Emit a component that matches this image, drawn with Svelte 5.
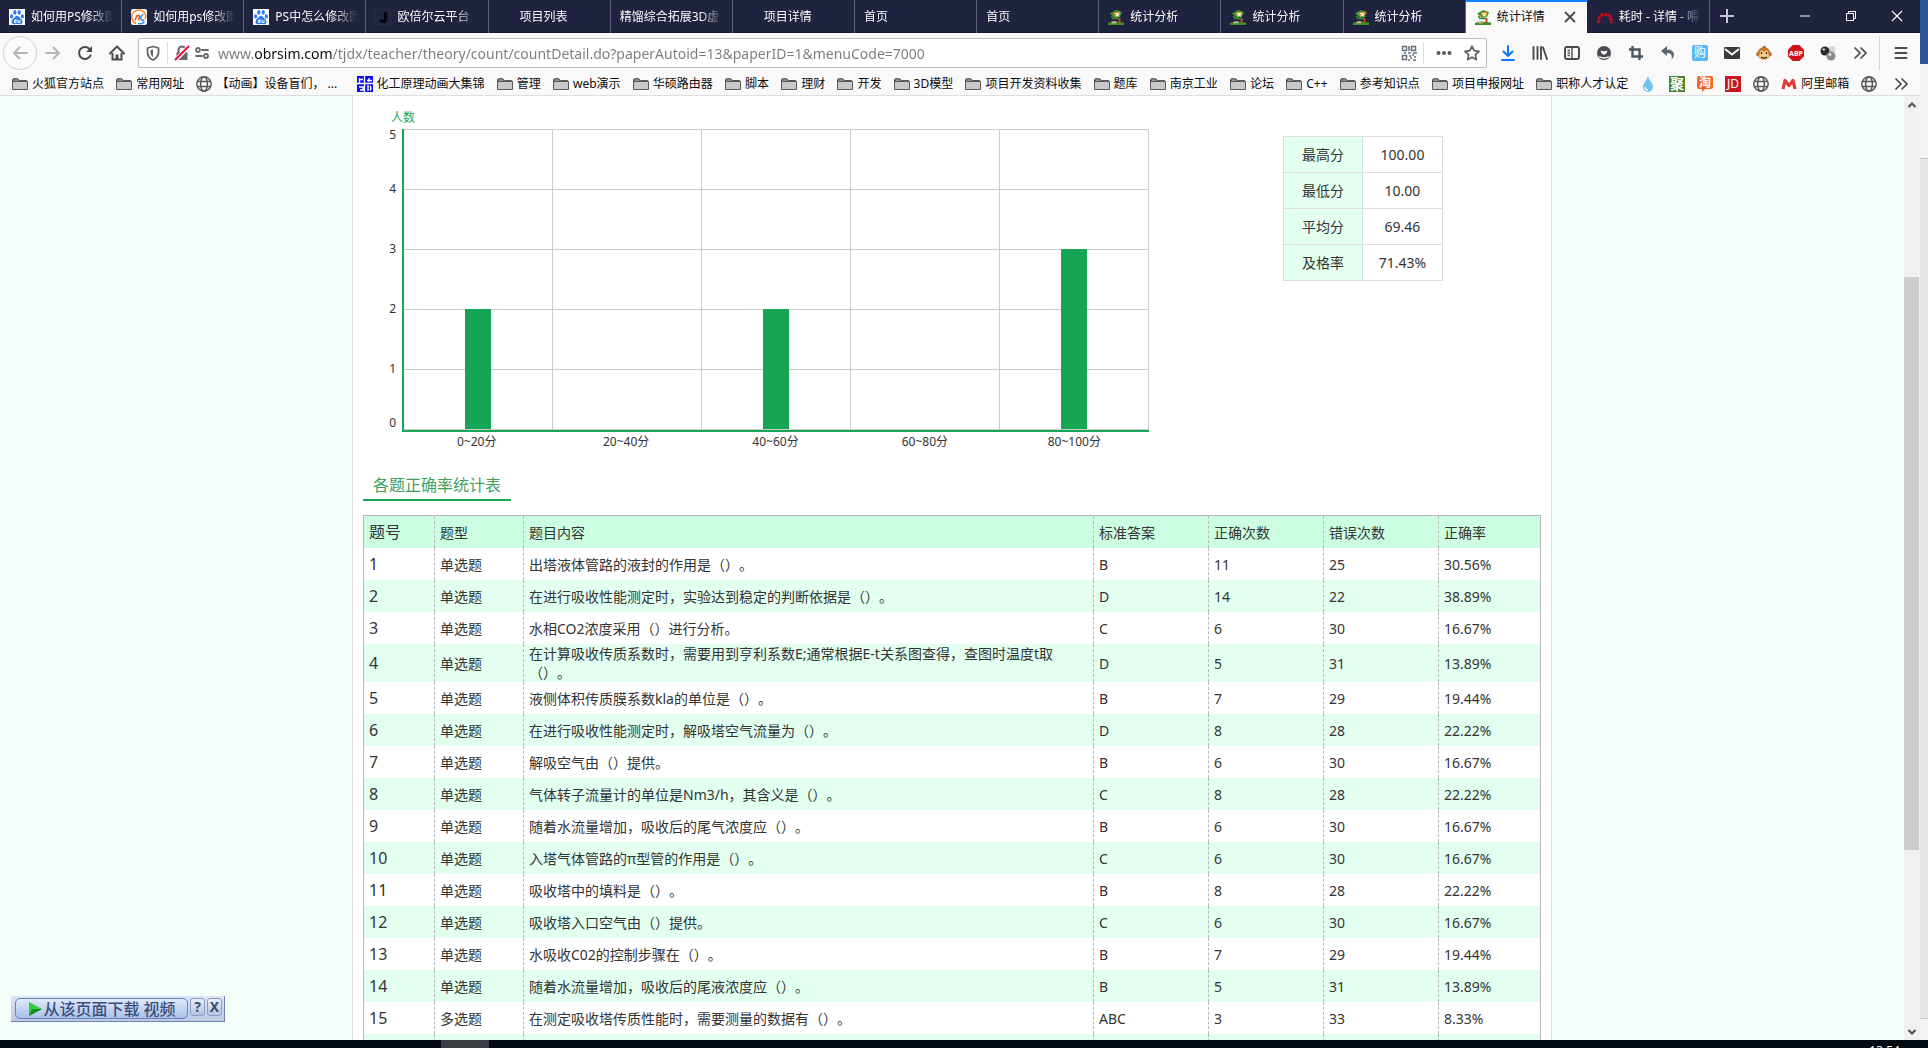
<script lang="ts">
	type Tab = { title: string; icon?: string; active?: boolean };
	type Bookmark = { label?: string; icon: string; title?: string; wide?: boolean };

	const tabs: Tab[] = [
		{ title: '如何用PS修改图', icon: 'baidu' },
		{ title: '如何用ps修改图', icon: 'nc' },
		{ title: 'PS中怎么修改图', icon: 'baidu' },
		{ title: '欧倍尔云平台', icon: 'letter-j' },
		{ title: '项目列表', icon: 'blank' },
		{ title: '精馏综合拓展3D虚' },
		{ title: '项目详情', icon: 'blank' },
		{ title: '首页' },
		{ title: '首页' },
		{ title: '统计分析', icon: 'campus' },
		{ title: '统计分析', icon: 'campus' },
		{ title: '统计分析', icon: 'campus' },
		{ title: '统计详情', icon: 'campus', active: true },
		{ title: '耗时 - 详情 - 嘚', icon: 'arc' }
	];

	const bookmarks: Bookmark[] = [
		{ label: '火狐官方站点', icon: 'folder' },
		{ label: '常用网址', icon: 'folder' },
		{ label: '【动画】设备盲们， ...', icon: 'globe', wide: true },
		{ label: '化工原理动画大集锦', icon: 'blocks' },
		{ label: '管理', icon: 'folder' },
		{ label: 'web演示', icon: 'folder' },
		{ label: '华硕路由器', icon: 'folder' },
		{ label: '脚本', icon: 'folder' },
		{ label: '理财', icon: 'folder' },
		{ label: '开发', icon: 'folder' },
		{ label: '3D模型', icon: 'folder' },
		{ label: '项目开发资料收集', icon: 'folder' },
		{ label: '题库', icon: 'folder' },
		{ label: '南京工业', icon: 'folder' },
		{ label: '论坛', icon: 'folder' },
		{ label: 'C++', icon: 'folder' },
		{ label: '参考知识点', icon: 'folder' },
		{ label: '项目申报网址', icon: 'folder' },
		{ label: '职称人才认定', icon: 'folder' },
		{ icon: 'drop', title: 'drop' },
		{ icon: 'ju', title: 'ju' },
		{ icon: 'tao', title: 'tao' },
		{ icon: 'jd', title: 'jd' },
		{ icon: 'globe', title: 'site' },
		{ label: '阿里邮箱', icon: 'mail-m' },
		{ icon: 'globe', title: 'site' }
	];

	const tools = [
		'download', 'library', 'sidebar', 'account', 'crop', 'undo',
		'gou', 'envelope', 'monkey', 'abp', 'balls', 'more'
	];

	let url = $state('www.obrsim.com/tjdx/teacher/theory/count/countDetail.do?paperAutoid=13&paperID=1&menuCode=7000');
	let showDownloader = $state(true);

	const ticks = [5, 4, 3, 2, 1, 0];
	const unit = 60;
	const ranges = [
		{ label: '0~20分', count: 2 },
		{ label: '20~40分', count: 0 },
		{ label: '40~60分', count: 2 },
		{ label: '60~80分', count: 0 },
		{ label: '80~100分', count: 3 }
	];

	const summary = [
		['最高分', '100.00'],
		['最低分', '10.00'],
		['平均分', '69.46'],
		['及格率', '71.43%']
	];

	const headers = ['题号', '题型', '题目内容', '标准答案', '正确次数', '错误次数', '正确率'];
	const rows = [
		['1', '单选题', '出塔液体管路的液封的作用是（）。', 'B', '11', '25', '30.56%'],
		['2', '单选题', '在进行吸收性能测定时，实验达到稳定的判断依据是（）。', 'D', '14', '22', '38.89%'],
		['3', '单选题', '水相CO2浓度采用（）进行分析。', 'C', '6', '30', '16.67%'],
		['4', '单选题', '在计算吸收传质系数时，需要用到亨利系数E;通常根据E-t关系图查得，查图时温度t取（）。', 'D', '5', '31', '13.89%'],
		['5', '单选题', '液侧体积传质膜系数kla的单位是（）。', 'B', '7', '29', '19.44%'],
		['6', '单选题', '在进行吸收性能测定时，解吸塔空气流量为（）。', 'D', '8', '28', '22.22%'],
		['7', '单选题', '解吸空气由（）提供。', 'B', '6', '30', '16.67%'],
		['8', '单选题', '气体转子流量计的单位是Nm3/h，其含义是（）。', 'C', '8', '28', '22.22%'],
		['9', '单选题', '随着水流量增加，吸收后的尾气浓度应（）。', 'B', '6', '30', '16.67%'],
		['10', '单选题', '入塔气体管路的π型管的作用是（）。', 'C', '6', '30', '16.67%'],
		['11', '单选题', '吸收塔中的填料是（）。', 'B', '8', '28', '22.22%'],
		['12', '单选题', '吸收塔入口空气由（）提供。', 'C', '6', '30', '16.67%'],
		['13', '单选题', '水吸收C02的控制步骤在（）。', 'B', '7', '29', '19.44%'],
		['14', '单选题', '随着水流量增加，吸收后的尾液浓度应（）。', 'B', '5', '31', '13.89%'],
		['15', '多选题', '在测定吸收塔传质性能时，需要测量的数据有（）。', 'ABC', '3', '33', '8.33%'],
		['', '', '', '', '', '', '']
	];
</script>

{#snippet icon(name: string)}
	<svg class="icon" viewBox="0 0 16 16" fill="none" aria-hidden="true">
		{#if name === 'baidu'}
			<rect width="16" height="16" fill="#fff" />
			<g fill="#2f7cf0">
				<ellipse cx="2.6" cy="7.4" rx="1.6" ry="2.1" />
				<ellipse cx="5.8" cy="3.4" rx="1.6" ry="2.3" />
				<ellipse cx="10.2" cy="3.4" rx="1.6" ry="2.3" />
				<ellipse cx="13.4" cy="7.4" rx="1.6" ry="2.1" />
				<path d="M8 6.8c1.5 0 2.3 1.5 3.3 2.5 1.3 1.1 2.5 2.1 2.2 3.9-.3 1.9-2 2.3-3.3 2-1.3-.2-3.1-.2-4.4 0-1.4.3-3-.2-3.3-2-.2-1.8 1-2.8 2.2-3.9C5.7 8.3 6.5 6.8 8 6.8z" />
			</g>
			<path d="M7 10v3.5H5.5v-2H7M9 11v2.5h2V11" stroke="#fff" />
		{:else if name === 'nc'}
			<rect width="16" height="16" rx="2" fill="#fff" />
			<path d="M5 14.5a7 7 0 0 1 5.5-13 6.500 6.500 0 0 1 3.5 9" stroke="#f08a2c" stroke-width="1.5" />
			<path d="M4 11.5l2-5.5M5.500 8c1-2 3.5-2.5 3-.5l-1 4" stroke="#e96b1a" stroke-width="1.6" />
			<path d="M12.5 5.5c-2 .3-3 2.5-2.6 4.2.3 1.6 1.8 2 3.1 1.3M7 14.5c3 .8 5.5-.5 6.5-2" stroke="#3d8de0" stroke-width="1.6" />
		{:else if name === 'letter-j'}
			<rect x=".5" y=".5" width="15" height="15" stroke="#292a40" />
			<path d="M10.5 3v7.5c0 2.5-4.5 2.5-5 0" stroke="#050510" stroke-width="3" />
		{:else if name === 'campus'}
			<path d="M0 14l5-1.5 6 .5 5 .5V16H0z" fill="#3f8f22" />
			<path d="M3 13c2-1 4-.8 6-.4l-1 1.6-4 .4z" fill="#c9b58f" />
			<path d="M2 4.500L8 1l6 2-2 5-5 1z" fill="#3c9a35" />
			<path d="M6 4l6-1.5v3L7 8z" fill="#f08c28" />
			<path d="M7 4.500l4 .5-3 1.500 3 .5" stroke="#fff" />
			<path d="M3.500 7l1.500 2.500h6" stroke="#3c8a30" stroke-width="1.5" />
			<rect x="10.5" y="9" width="2" height="5" fill="#b84a2a" />
		{:else if name === 'arc'}
			<path d="M1.8 14C1 9 3 5.500 8 5.500S15 9 14.200 14" stroke="#b5121b" stroke-width="3.2" stroke-dasharray="3.2 .6" />
		{:else if name === 'folder'}
			<path d="M.5 13.5v-10l.8-.8h4.500l1.700 1.800h7.200l.8.8v8.200z" fill="#c8c8ca" stroke="#58585a" />
			<path d="M1 4v1.500h14M1.500 3.200h4.300l1.400 1.800H1.500z" stroke="#58585a" fill="#ededee" />
		{:else if name === 'globe'}
			<g stroke="#5a5a5d" stroke-width="1.5">
				<circle cx="8" cy="8" r="7.2" />
				<ellipse cx="8" cy="8" rx="3.4" ry="7.200" />
				<path d="M1.500 5.500h13M1.500 10.500h13" />
			</g>
		{:else if name === 'blocks'}
			<rect width="16" height="16" fill="#0808f4" />
			<path d="M0 7.500h16M7.500 0v16M2.500 2v5M2 3.500h4M12 2v4M10 4.500h5M2 11h4v3H3M11 9v6M13 10c1.500 2 1.500 3 0 4.500" stroke="#fff" stroke-width="1.4" />
		{:else if name === 'drop'}
			<path d="M8 0C9 4.500 13 7 13 11a5 5 0 0 1-10 0C3 7 7 4.500 8 0z" fill="#6ec1e8" />
			<path d="M5 11c0 2 1.300 3 3 3" stroke="#fff" stroke-width="1.3" />
		{:else if name === 'ju'}
			<rect width="16" height="16" fill="#47862a" />
			<text x="8" y="13" text-anchor="middle" font-size="14" font-weight="700" fill="#fff">聚</text>
		{:else if name === 'tao'}
			<path d="M2 0h12a2 2 0 0 1 2 2v9a2 2 0 0 1-2 2H8l-3 3v-3H2a2 2 0 0 1-2-2V2a2 2 0 0 1 2-2z" fill="#f2672a" />
			<text x="8" y="11" text-anchor="middle" font-size="12" font-weight="700" fill="#fff">淘</text>
		{:else if name === 'jd'}
			<rect width="16" height="16" fill="#c81623" />
			<text x="8" y="12" text-anchor="middle" font-size="12" fill="#fff">JD</text>
		{:else if name === 'mail-m'}
			<path d="M2 13L4 4.500l4 5 4-5L14 13" stroke="#e0393e" stroke-width="3.2" stroke-linejoin="round" />
		{:else if name === 'back'}
			<path d="M15 8H2M7.500 2.500L2 8l5.500 5.500" stroke="#b5b5b7" stroke-width="2" stroke-linecap="round" stroke-linejoin="round" />
		{:else if name === 'forward'}
			<path d="M1 8h13M8.500 2.500L14 8l-5.500 5.500" stroke="#b5b5b7" stroke-width="2" stroke-linecap="round" stroke-linejoin="round" />
		{:else if name === 'reload'}
			<path d="M13.500 10.500a6 6 0 1 1-1.200-6.800l1.700 1.800" stroke="#4a4a4f" stroke-width="2" stroke-linecap="round" />
			<path d="M15 1v6H9z" fill="#4a4a4f" />
		{:else if name === 'home'}
			<path d="M1 8.500L8 1.500l7 7" stroke="#4a4a4f" stroke-width="2" stroke-linecap="round" stroke-linejoin="round" />
			<path d="M3.500 8v6.500h9V8" stroke="#4a4a4f" stroke-width="2" />
			<path d="M6.500 9.500h3V15h-3z" fill="#4a4a4f" />
		{:else if name === 'shield'}
			<path d="M8 1.500l5.500 1.500v4c0 4-2 6.500-5.500 8-3.500-1.500-5.500-4-5.500-8V3z" stroke="#666669" stroke-width="1.8" stroke-linejoin="round" />
			<path d="M8 4.500v7.500c-1.700-1-2.500-2.500-2.500-5V5.200z" fill="#666669" />
		{:else if name === 'lock'}
			<path d="M4.500 7V5a3.500 3.500 0 0 1 7 0v2" stroke="#666669" stroke-width="2" />
			<rect x="2.5" y="7" width="11" height="8" rx="1" fill="#666669" />
			<path d="M1.500 15L14.500 2" stroke="#fff" stroke-width="4" />
			<path d="M1.500 14.500L14.500 1.500" stroke="#ff0039" stroke-width="1.8" stroke-linecap="round" />
		{:else if name === 'perms'}
			<g stroke="#666669" stroke-width="1.8">
				<circle cx="4" cy="5" r="2" />
				<path d="M8 5h6M2 11h6" stroke-linecap="round" />
				<circle cx="12" cy="11" r="2" />
			</g>
		{:else if name === 'qr'}
			<g stroke="#66707a" stroke-width="1.5">
				<path d="M1.500 1.500h4v4h-4zM10.500 1.500h4v4h-4zM1.500 10.500h4v4h-4z" />
				<path d="M8 1v5M3 8h2M7 8h3M12 8h4M8 11h2M11 10h2M9 13h2M13 12h2M12 15h3M7 15h2" />
			</g>
		{:else if name === 'dots'}
			<g fill="#58585b"><circle cx="2.5" cy="8" r="2" /><circle cx="8" cy="8" r="2" /><circle cx="13.5" cy="8" r="2" /></g>
		{:else if name === 'star'}
			<path d="M8 1.200l2.100 4.500 4.900.7-3.600 3.300.9 4.900L8 12.200l-4.300 2.400.9-4.900L1 6.400l4.900-.7z" stroke="#5e5e61" stroke-width="1.7" stroke-linejoin="round" />
		{:else if name === 'download'}
			<path d="M8 1v10M3.500 6.500L8 11l4.500-4.500M2 15h12" stroke="#0a7bff" stroke-width="2" stroke-linecap="round" stroke-linejoin="round" />
		{:else if name === 'library'}
			<path d="M1.500 2v12M5.500 2v12M9 2v12M11 2.500l4 11.500" stroke="#4a4a4f" stroke-width="1.9" stroke-linecap="round" />
		{:else if name === 'sidebar'}
			<rect x="1" y="2" width="14" height="12" rx="2" stroke="#4a4a4f" stroke-width="2" />
			<path d="M8 2v12M3.500 5.500H6M3.500 8H6M3.500 10.500H6" stroke="#4a4a4f" stroke-width="1.4" />
		{:else if name === 'account'}
			<circle cx="8" cy="8" r="7" fill="#4a4a4f" />
			<path d="M4.600 5.500c.5 5.500 6.300 5.500 6.800 0-2 1-4.800 1-6.800 0z" fill="#f9f9fa" />
			<path d="M3 11.500c3 1.800 7 1.800 10 0" stroke="#f9f9fa" stroke-width="1.3" />
		{:else if name === 'crop'}
			<path d="M4.500 1v10.500H15M1 4.500h10.500V15" stroke="#4a5560" stroke-width="2.4" />
		{:else if name === 'undo'}
			<path d="M7 1L1 6l6 5V8c4 0 5.500 2 4.500 6.500C15.500 11 15 4.500 7 4.500z" fill="#5b6670" />
		{:else if name === 'gou'}
			<rect width="16" height="16" rx="2" fill="#58b8f5" />
			<text x="8" y="12" text-anchor="middle" font-size="12" fill="#fff">购</text>
		{:else if name === 'envelope'}
			<rect y="2" width="16" height="12" rx="1" fill="#3b3b3e" />
			<path d="M1 4l7 5.500L15 4" stroke="#f9f9fa" stroke-width="1.8" />
		{:else if name === 'monkey'}
			<circle cx="2.5" cy="9" r="2.3" fill="#b06b24" />
			<circle cx="13.5" cy="9" r="2.3" fill="#b06b24" />
			<circle cx="8" cy="8.5" r="6.5" fill="#c27a2c" />
			<path d="M6 2.500L9 .5l1 2" fill="#8a4f17" />
			<ellipse cx="8" cy="11" rx="5" ry="4" fill="#f3cd8c" />
			<circle cx="5.8" cy="7.5" r="2" fill="#f3cd8c" />
			<circle cx="10.2" cy="7.5" r="2" fill="#f3cd8c" />
			<path d="M5.500 7v2M10.500 7v2M5 12c2 1.500 4 1.500 6 0" stroke="#40240c" stroke-width="1.2" />
		{:else if name === 'abp'}
			<path d="M4.700 0h6.600L16 4.700v6.600L11.300 16H4.700L0 11.300V4.700z" fill="#d0101a" />
			<text x="8" y="10.5" text-anchor="middle" font-size="7" font-weight="700" fill="#fff">ABP</text>
		{:else if name === 'balls'}
			<circle cx="12" cy="4.5" r="3.5" fill="#d6d6d6" />
			<circle cx="5" cy="6" r="4.5" fill="#2a2a2a" />
			<circle cx="11" cy="11" r="4.5" fill="#8c8c8c" />
			<circle cx="3.8" cy="4.5" r="1.3" fill="#c8c8c8" />
			<circle cx="10" cy="9.5" r="1.5" fill="#ddd" />
		{:else if name === 'more'}
			<path d="M3 3l5 5-5 5M9 3l5 5-5 5" stroke="#4a4a4f" stroke-width="1.7" stroke-linecap="round" />
		{:else if name === 'menu'}
			<path d="M2.500 3h11M2.500 8h11M2.500 13h11" stroke="#4a4a4f" stroke-width="2" stroke-linecap="round" />
		{:else if name === 'plus'}
			<path d="M8 1v14M1 8h14" stroke="#c9c9d1" stroke-width="2" />
		{:else if name === 'minimize'}
			<path d="M3 8h10" stroke="#fff" />
		{:else if name === 'restore'}
			<path d="M3.500 5.500h7v7h-7zM5.500 5.500v-2h7v7h-2" stroke="#fff" />
		{:else if name === 'close'}
			<path d="M3 3l10 10M13 3L3 13" stroke="#fff" stroke-width="1.1" />
		{:else if name === 'tab-close'}
			<path d="M3.500 3.500l9 9M12.500 3.500l-9 9" stroke="#4a4a4f" stroke-width="1.8" stroke-linecap="round" />
		{:else if name === 'up'}
			<path d="M4.500 10L8 6.500l3.500 3.500" stroke="#555" stroke-width="2.2" />
		{:else if name === 'down'}
			<path d="M4.500 6L8 9.500 11.500 6" stroke="#555" stroke-width="2.2" />
		{:else if name === 'play'}
			<path d="M2 1l13 7L2 15z" fill="#2ed03c" />
			<path d="M5 8h10L2 15z" fill="#138a28" />
		{/if}
	</svg>
{/snippet}

<div class="desktop">
	<div class="screen">
		<div class="browser">
			<div class="tab-bar">
				<div class="tabs">
					{#each tabs as tab}
						<div class="tab" class:active={tab.active}>
							<button class="tab-button">
								{#if tab.icon}{@render icon(tab.icon)}{/if}
								<span class="tab-title">{tab.title}</span>
							</button>
							{#if tab.active}
								<button class="tab-close" aria-label="关闭标签页">{@render icon('tab-close')}</button>
							{/if}
						</div>
					{/each}
				</div>
				<button class="new-tab" aria-label="新建标签页">{@render icon('plus')}</button>
				<div class="window-buttons">
					<button aria-label="最小化">{@render icon('minimize')}</button>
					<button aria-label="还原">{@render icon('restore')}</button>
					<button aria-label="关闭">{@render icon('close')}</button>
				</div>
			</div>

			<div class="nav-bar">
				<button class="back" aria-label="后退">{@render icon('back')}</button>
				<button class="tool" aria-label="前进">{@render icon('forward')}</button>
				<button class="tool" aria-label="刷新">{@render icon('reload')}</button>
				<button class="tool" aria-label="主页">{@render icon('home')}</button>
				<div class="url-bar">
					<span class="shield">{@render icon('shield')}</span>
					{@render icon('lock')}
					{@render icon('perms')}
					<input type="text" aria-label="地址" bind:value={url} spellcheck="false" />
					<span class="qr">{@render icon('qr')}</span>
					<span class="url-actions">
						{@render icon('dots')}
						{@render icon('star')}
					</span>
				</div>
				{#each tools as tool}
					<button class="tool" aria-label={tool}>{@render icon(tool)}</button>
				{/each}
				<span class="nav-divider"></span>
				<button class="tool" aria-label="菜单">{@render icon('menu')}</button>
			</div>

			<nav class="bookmarks">
				{#each bookmarks as mark}
					<a href="#top" aria-label={mark.label ?? mark.title}>
						{@render icon(mark.icon)}
						{#if mark.label}<span class:wide={mark.wide}>{mark.label}</span>{/if}
					</a>
				{/each}
				<button class="more-marks" aria-label="更多书签">{@render icon('more')}</button>
			</nav>

			<div class="viewport">
				<div class="page">
					<main class="card">
						<div class="overview">
							<div class="chart">
								<div class="axis-name">人数</div>
								<div class="chart-body">
									<div class="y-labels">
										{#each ticks as tick}<span>{tick}</span>{/each}
									</div>
									<div class="plot">
										{#each ranges as range}
											<div class="slot">
												{#if range.count}
													<div class="bar" style="height: {range.count * unit}px"></div>
												{/if}
											</div>
										{/each}
									</div>
								</div>
								<div class="x-labels">
									{#each ranges as range}<span>{range.label}</span>{/each}
								</div>
							</div>

							<table class="summary">
								<tbody>
									{#each summary as [label, value]}
										<tr>
											<th scope="row">{label}</th>
											<td>{value}</td>
										</tr>
									{/each}
								</tbody>
							</table>
						</div>

						<h2>各题正确率统计表</h2>

						<table class="questions">
							<colgroup>
								<col class="c-no" />
								<col class="c-type" />
								<col />
								<col class="c-num" />
								<col class="c-num" />
								<col class="c-num" />
								<col class="c-rate" />
							</colgroup>
							<thead>
								<tr>
									{#each headers as header}<th scope="col">{header}</th>{/each}
								</tr>
							</thead>
							<tbody>
								{#each rows as row}
									<tr>
										{#each row as cell}<td>{cell}</td>{/each}
									</tr>
								{/each}
							</tbody>
						</table>
					</main>
				</div>

				<div class="scrollbar">
					<button aria-label="向上">{@render icon('up')}</button>
					<div class="track-above"></div>
					<div class="thumb"></div>
					<div class="track-below"></div>
					<button aria-label="向下">{@render icon('down')}</button>
				</div>

				{#if showDownloader}
					<div class="downloader">
						<button class="download-main">{@render icon('play')}从该页面下载 视频</button>
						<button class="mini" aria-label="帮助">?</button>
						<button class="mini" aria-label="关闭下载条" onclick={() => (showDownloader = false)}>X</button>
					</div>
				{/if}
			</div>
		</div>

		<div class="behind">
			<div class="behind-title"></div>
			<div class="behind-ribbon"></div>
			<div class="behind-body"></div>
			<div class="behind-status"></div>
		</div>
	</div>

	<footer class="taskbar">
		<div class="task"></div>
		<time>13:54</time>
	</footer>
</div>

<style>
	:global(body) {
		margin: 0;
	}

	.desktop {
		height: 100vh;
		display: flex;
		flex-direction: column;
		overflow: hidden;
		font-family: "Noto Sans", "Noto Sans CJK SC", sans-serif;
		font-size: 12px;
		color: #333;
		text-spacing-trim: space-all;
	}

	button {
		border: none;
		padding: 0;
		background: none;
		color: inherit;
		font: inherit;
		display: flex;
		align-items: center;
		justify-content: center;
	}

	.icon {
		width: 16px;
		height: 16px;
		flex: none;
		display: block;
	}

	.screen {
		flex: 1;
		min-height: 0;
		display: flex;
	}

	.browser {
		flex: 1;
		min-width: 0;
		display: flex;
		flex-direction: column;
	}

	/* tabs */
	.tab-bar {
		flex: none;
		height: 33px;
		box-sizing: border-box;
		background: #202340;
		border-bottom: 1px solid #14162c;
		color: #f9f9fa;
		display: flex;
	}

	.tabs {
		flex: 1;
		min-width: 0;
		display: flex;
	}

	.tab {
		flex: 1;
		min-width: 0;
		height: 33px;
		box-sizing: border-box;
		border-right: 1px solid #5f6176;
		display: flex;
	}

	.tab.active {
		background: #f9f9fa;
		border-top: 2px solid #0a84ff;
		border-right-color: #202340;
		color: #0c0c0d;
	}

	.tab-button {
		flex: 1;
		min-width: 0;
		justify-content: flex-start;
		gap: 6px;
		padding: 0 8px 0 9px;
	}

	.tab.active .tab-button {
		padding: 0 0 2px 9px;
	}

	.tab-title {
		flex: 1;
		overflow: hidden;
		white-space: nowrap;
		text-align: left;
		line-height: 20px;
		mask-image: linear-gradient(to left, transparent, #000 24px);
	}

	.tab.active .tab-title {
		mask-image: none;
	}

	.tab-close {
		width: 34px;
		padding-bottom: 2px;
	}

	.new-tab {
		width: 34px;
	}

	.window-buttons {
		margin-left: 38px;
		display: flex;
	}

	.window-buttons button {
		width: 46px;
	}

	/* navigation */
	.nav-bar {
		flex: none;
		height: 40px;
		padding: 0 3px;
		background: #f9f9fa;
		display: flex;
		align-items: center;
	}

	.back {
		width: 34px;
		height: 34px;
		box-sizing: border-box;
		border: 1px solid #d2d2d4;
		border-radius: 50%;
		background: #fbfbfb;
	}

	.tool {
		width: 32px;
		height: 32px;
	}

	.url-bar {
		flex: 1;
		height: 30px;
		box-sizing: border-box;
		margin: 0 5px;
		padding: 0 6px;
		border: 1px solid #bcbcbe;
		border-radius: 2px;
		background: #fff;
		display: flex;
		align-items: center;
		gap: 4px;
	}

	.shield {
		padding-right: 6px;
		border-right: 1px solid #dcdcde;
		margin-right: 2px;
	}

	.shield,
	.qr {
		height: 22px;
		display: flex;
		align-items: center;
	}

	.qr {
		padding-right: 6px;
		border-right: 1px solid #dcdcde;
	}

	.url-actions {
		display: flex;
		gap: 12px;
		padding-left: 8px;
	}

	/* the host name is darker than the rest of the address */
	.url-bar input {
		flex: 1;
		min-width: 0;
		height: 26px;
		margin-left: 4px;
		padding: 0;
		border: none;
		outline: none;
		font-family: inherit;
		font-size: 14px;
		background: linear-gradient(to right, #7b7b7e 37px, #0c0c0d 37px, #0c0c0d 115px, #7b7b7e 115px);
		background-clip: text;
		color: transparent;
	}

	.nav-divider {
		width: 1px;
		height: 34px;
		margin: 0 5px 0 3px;
		background: #d4d4d6;
	}

	/* bookmarks */
	.bookmarks {
		flex: none;
		height: 23px;
		box-sizing: border-box;
		padding: 0 11px 1px 12px;
		border-bottom: 1px solid #dedede;
		background: #f9f9fa;
		display: flex;
		align-items: center;
		justify-content: space-between;
	}

	.bookmarks a {
		flex: none;
		display: flex;
		align-items: center;
		gap: 4px;
		color: #0c0c0d;
		text-decoration: none;
		white-space: nowrap;
		line-height: 20px;
	}

	.wide {
		width: 128px;
	}

	.more-marks {
		margin-left: 3px;
	}

	/* page */
	.viewport {
		position: relative;
		flex: 1;
		min-height: 0;
		display: flex;
	}

	.page {
		flex: 1;
		overflow: hidden;
		background: #f5fffa;
	}

	.card {
		max-width: 1200px;
		box-sizing: border-box;
		margin: 0 auto;
		padding: 0 10px 40px;
		border: solid #ddd;
		border-width: 0 1px;
		background: #fff;
	}

	.overview {
		display: flex;
		align-items: flex-start;
	}

	.chart {
		width: 786px;
		padding-top: 12px;
	}

	.axis-name {
		margin-bottom: 1px;
		padding-left: 28px;
		line-height: 20px;
		color: #16a757;
	}

	.chart-body {
		display: flex;
		gap: 6px;
	}

	.y-labels {
		width: 33px;
		display: grid;
		grid-template-rows: 30px repeat(4, 60px) 30px;
		align-items: center;
		text-align: right;
		line-height: 12px;
	}

	.y-labels span:first-child {
		align-self: start;
	}

	.y-labels span:last-child {
		align-self: end;
	}

	.plot {
		flex: 1;
		height: 301px;
		border-left: 2px solid #16a757;
		border-bottom: 2px solid #16a757;
		background: repeating-linear-gradient(#ccc 0 1px, transparent 1px 60px);
		display: flex;
	}

	.slot {
		flex: 1;
		padding-bottom: 1px;
		border-right: 1px solid #ccc;
		display: flex;
		align-items: flex-end;
		justify-content: center;
	}

	.bar {
		width: 26px;
		background: #15a555;
	}

	.x-labels {
		padding-left: 39px;
		display: flex;
		text-align: center;
		line-height: 20px;
	}

	.x-labels span {
		flex: 1;
	}

	.summary {
		width: 160px;
		margin: 40px 0 0 134px;
		border-collapse: collapse;
		font-size: 14px;
		line-height: 20px;
		text-align: center;
	}

	.summary th,
	.summary td {
		height: 35px;
		padding: 0;
		border: 1px solid #ddd;
		font-weight: 400;
	}

	.summary th {
		width: 78px;
		background: #e3fff0;
	}

	h2 {
		width: fit-content;
		margin: 19px 0 14px;
		padding: 0 10px;
		border-bottom: 2px solid #16a757;
		font-size: 16px;
		font-weight: 400;
		line-height: 28px;
		color: #3f9f5b;
	}

	.questions {
		width: 100%;
		table-layout: fixed;
		border: 1px solid #b9b9b9;
		border-spacing: 0;
		font-size: 14px;
		line-height: 19px;
		text-align: left;
	}

	.c-no {
		width: 71px;
	}

	.c-type {
		width: 89px;
	}

	.c-num {
		width: 115px;
	}

	.c-rate {
		width: 101px;
	}

	.questions th,
	.questions td {
		height: 32px;
		padding: 0 4px 0 5px;
		border-right: 1px dashed #b9b9b9;
		box-sizing: border-box;
		font-weight: 400;
	}

	.questions th:first-child,
	.questions td:first-child {
		font-size: 16px;
	}

	.questions th:last-child,
	.questions td:last-child {
		border-right: none;
	}

	.questions thead tr {
		background: #ccffe1;
	}

	.questions tbody tr:nth-child(even) {
		background: #e3fff0;
	}

	.scrollbar {
		width: 16px;
		background: #f0f0f0;
		display: flex;
		flex-direction: column;
	}

	.scrollbar button {
		height: 17px;
	}

	.track-above {
		flex: 164;
	}

	.thumb {
		flex: 573;
		margin-right: 1px;
		background: #cdcdcd;
	}

	.track-below {
		flex: 173;
	}

	/* floats over the page in the lower left corner */
	.downloader {
		position: absolute;
		left: 11px;
		bottom: 18px;
		height: 26px;
		width: 214px;
		box-sizing: border-box;
		padding: 2px 2px 0 4px;
		border: solid #6f81b0;
		border-width: 0 1px 1px 0;
		background: linear-gradient(#dde5f6, #bccae6);
		display: flex;
		align-items: flex-start;
		gap: 2px;
	}

	.download-main {
		flex: 1;
		height: 21px;
		box-sizing: border-box;
		border: 1px solid #6a80b8;
		border-radius: 5px;
		background: linear-gradient(#dfe9fa, #a9c1ea);
		color: #3b4f7d;
		font-size: 16px;
		font-weight: 500;
		line-height: 16px;
		white-space: nowrap;
	}

	.mini {
		width: 15px;
		height: 18px;
		box-sizing: border-box;
		border: 1px solid #8b9dc4;
		border-radius: 3px;
		background: linear-gradient(#e8eefa, #b3c5e6);
		color: #3b4f6d;
		font-size: 14px;
		font-weight: 700;
		line-height: 14px;
	}

	/* edge of the window behind the browser */
	.behind {
		width: 8px;
		background: #f2f2f2;
		display: flex;
		flex-direction: column;
	}

	.behind-title {
		height: 64px;
		background: #2b579a;
	}

	.behind-ribbon {
		height: 94px;
	}

	.behind-body {
		flex: 1;
		border: solid #c6c6c6;
		border-width: 1px 0;
		background: #e5e5e5;
	}

	.behind-status {
		height: 21px;
	}

	.taskbar {
		flex: none;
		height: 8px;
		padding: 0 28px 0 441px;
		background: #040a12;
		color: #fff;
		display: flex;
		justify-content: space-between;
		overflow: hidden;
	}

	.task {
		width: 48px;
		background: #3a3d42;
	}

	time {
		padding-top: 3px;
		line-height: 16px;
	}
</style>
